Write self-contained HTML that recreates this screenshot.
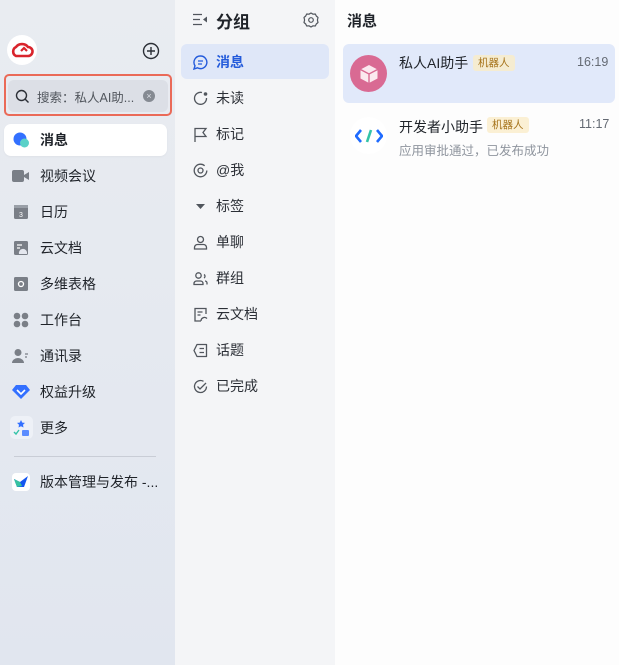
<!DOCTYPE html>
<html><head><meta charset="utf-8"><style>
*{margin:0;padding:0;box-sizing:border-box}
body{width:619px;height:665px;overflow:hidden;font-family:"Liberation Sans","Noto Sans CJK SC",sans-serif;position:relative;background:#fdfdfd}
.l{position:absolute;left:0;top:0;width:175px;height:665px;background:linear-gradient(180deg,#e9ecf1,#e1e6ef)}
.m{position:absolute;left:175px;top:0;width:160px;height:665px;background:#f4f5f7}
.r{position:absolute;left:335px;top:0;width:284px;height:665px;background:#fdfdfd}
.a{position:absolute}
.li{position:absolute;left:12px;height:20px;display:flex;align-items:center;font-size:14px;color:#1f2329}
.li .ic{width:18px;height:18px;margin-right:10px;display:flex;align-items:center;justify-content:center}
.mi{position:absolute;left:16px;height:20px;display:flex;align-items:center;font-size:14px;color:#2b2f36}
.mi svg{margin-right:8px}
</style></head><body>
<div class="l"></div><div class="m"></div><div class="r"></div>

<div class="a" style="left:7px;top:35px;width:30px;height:30px;border-radius:50%;background:#fff;display:flex;align-items:center;justify-content:center">
<svg width="24" height="16" viewBox="0 0 24 16"><path d="M6 14 A5 5 0 0 1 6 5 A7 6 0 0 1 18 5 A4.5 4.5 0 0 1 18 14 Z" fill="none" stroke="#d9242c" stroke-width="2.6"/><path d="M11 9 l3 -3 l3 3" fill="none" stroke="#d9242c" stroke-width="2.2"/></svg></div>
<svg class="a" style="left:142px;top:42px" width="18" height="18" viewBox="0 0 18 18"><circle cx="9" cy="9" r="7.5" fill="none" stroke="#2b2f36" stroke-width="1.4"/><path d="M9 5v8M5 9h8" stroke="#2b2f36" stroke-width="1.4"/></svg>

<div class="a" style="left:4px;top:74px;width:168px;height:42px;border:2px solid #ea6a58;border-radius:5px"></div>
<div class="a" style="left:8px;top:80px;width:160px;height:32px;background:#dcdfe6;border-radius:6px"></div>
<svg class="a" style="left:15px;top:89px" width="15" height="15" viewBox="0 0 15 15"><circle cx="6.5" cy="6.5" r="5" fill="none" stroke="#2b2f36" stroke-width="1.4"/><path d="M10 10l3.5 3.5" stroke="#2b2f36" stroke-width="1.4"/></svg>
<div class="a" style="left:37px;top:87px;font-size:12.5px;color:#51565d">搜索：私人AI助...</div>
<div class="a" style="left:143px;top:90px;width:12px;height:12px;border-radius:50%;background:#858a92;color:#dcdfe6;font-size:9px;line-height:12px;text-align:center">×</div>

<div class="a" style="left:4px;top:124px;width:163px;height:32px;background:#fff;border-radius:7px;box-shadow:0 1px 2px rgba(0,0,0,.04)"></div>
<div class="li" style="top:130px;font-weight:bold"><span class="ic"><svg width="18" height="18"><circle cx="8" cy="8" r="6.5" fill="#3370ff"/><circle cx="12.5" cy="12" r="4.5" fill="#5ad1c8"/></svg></span>消息</div>
<div class="li" style="top:166px"><span class="ic"><svg width="18" height="14"><rect x="0" y="1" width="12" height="12" rx="2" fill="#7a7f87"/><path d="M12 6l5-3v8l-5-3z" fill="#7a7f87"/></svg></span>视频会议</div>
<div class="li" style="top:202px"><span class="ic"><svg width="16" height="16"><rect x="1" y="1" width="14" height="14" rx="1.5" fill="#7a7f87"/><rect x="1" y="1" width="14" height="3" fill="#9aa0a8"/><text x="6" y="13" font-size="7" fill="#fff">3</text></svg></span>日历</div>
<div class="li" style="top:238px"><span class="ic"><svg width="16" height="16"><rect x="1" y="1" width="14" height="14" rx="1.5" fill="#7a7f87"/><path d="M4 5h5M4 8h3" stroke="#fff" stroke-width="1.3"/><path d="M6 14a4 4 0 0 1 8-2v2z" fill="#e4e7ee"/></svg></span>云文档</div>
<div class="li" style="top:274px"><span class="ic"><svg width="16" height="16"><rect x="1" y="1" width="14" height="14" rx="1.5" fill="#7a7f87"/><circle cx="8" cy="8" r="2.5" fill="none" stroke="#fff" stroke-width="1.3"/></svg></span>多维表格</div>
<div class="li" style="top:310px"><span class="ic"><svg width="16" height="16" fill="#7a7f87"><circle cx="4" cy="4" r="3.3"/><circle cx="12" cy="4" r="3.3"/><circle cx="4" cy="12" r="3.3"/><circle cx="12" cy="12" r="3.3"/></svg></span>工作台</div>
<div class="li" style="top:346px"><span class="ic"><svg width="18" height="16" fill="#7a7f87"><circle cx="6" cy="4.5" r="3.5"/><path d="M0 15a6 5 0 0 1 12 0z"/><path d="M13 6h3M13 9h2" stroke="#7a7f87" stroke-width="1.2"/></svg></span>通讯录</div>
<div class="li" style="top:382px"><span class="ic"><svg width="18" height="16"><path d="M4 1h10l4 5-9 9-9-9z" fill="#3370ff"/><path d="M5 6l4 4 4-4" fill="none" stroke="#fff" stroke-width="1.6"/></svg></span>权益升级</div>
<div class="a" style="left:10px;top:416px;width:23px;height:23px;background:#eef1f7;border-radius:5px"></div>
<div class="li" style="top:418px"><span class="ic"><svg width="18" height="18"><path d="M9 1l1.3 2.6 2.7.3-2 1.9.5 2.7L9 7.2 6.5 8.5 7 5.8 5 3.9l2.7-.3z" fill="#3370ff"/><path d="M2 13l2 2 3-4" fill="none" stroke="#34c3a8" stroke-width="1.4"/><rect x="10" y="11" width="7" height="6" rx="1" fill="#5b8cff"/></svg></span>更多</div>
<div class="a" style="left:14px;top:456px;width:142px;height:1px;background:#c9cdd6"></div>
<div class="li" style="top:472px;font-size:14px"><span class="ic" style="background:#fff;border-radius:4px"><svg width="16" height="14"><path d="M1 4l6 3 8-6-4 11H4z" fill="#1456f0"/><path d="M1 4l6 3 2 4-5 1z" fill="#37c2a0"/></svg></span>版本管理与发布 -...</div>

<svg class="a" style="left:193px;top:13px" width="15" height="13"><path d="M0 1.5h9M0 6.5h7M0 11.5h9" stroke="#51565d" stroke-width="1.3"/><path d="M14 3.5v6l-4-3z" fill="#51565d"/></svg>
<div class="a" style="left:216px;top:8px;font-size:17px;font-weight:bold;color:#1f2329">分组</div>
<svg class="a" style="left:303px;top:12px" width="16" height="16" viewBox="0 0 16 16"><path d="M8 1l2 1.2 2.3-.2 1 2 1.7 1.5-.6 2.5.6 2.5-1.7 1.5-1 2-2.3-.2L8 15l-2-1.2-2.3.2-1-2L1 10.5 1.6 8 1 5.5 2.7 4l1-2 2.3.2z" fill="none" stroke="#51565d" stroke-width="1.2" stroke-linejoin="round"/><circle cx="8" cy="8" r="2.3" fill="none" stroke="#51565d" stroke-width="1.2"/></svg>
<div class="a" style="left:181px;top:44px;width:148px;height:35px;background:#dfe7f8;border-radius:6px"></div>
<div class="mi" style="top:52px;color:#245bdb;font-weight:bold;left:193px"><svg width="15" height="15"><path d="M7.5 1a6.3 6.3 0 1 1-3 11.8L1 14l1-3.3A6.3 6.3 0 0 1 7.5 1z" fill="none" stroke="#245bdb" stroke-width="1.4"/><path d="M5 6h5M5 9h4" stroke="#245bdb" stroke-width="1.3"/></svg>消息</div>
<div class="mi" style="top:88px;left:193px"><svg width="15" height="15"><path d="M9 1.5A6 6 0 1 0 13.5 7" fill="none" stroke="#51565d" stroke-width="1.3"/><circle cx="12.5" cy="3" r="1.8" fill="#51565d"/></svg>未读</div>
<div class="mi" style="top:124px;left:193px"><svg width="15" height="15"><path d="M2 15V1.5h11l-3 4 3 4H2" fill="none" stroke="#51565d" stroke-width="1.3"/></svg>标记</div>
<div class="mi" style="top:160px;left:193px"><svg width="15" height="15"><circle cx="7.5" cy="7.5" r="6.3" fill="none" stroke="#51565d" stroke-width="1.3" stroke-dasharray="34 6"/><circle cx="7.5" cy="7.5" r="2.5" fill="none" stroke="#51565d" stroke-width="1.3"/></svg>@我</div>
<div class="mi" style="top:196px;left:193px"><svg width="15" height="15"><path d="M3 5h9l-4.5 5z" fill="#51565d"/></svg>标签</div>
<div class="mi" style="top:232px;left:193px"><svg width="15" height="15"><circle cx="7.5" cy="4.5" r="3" fill="none" stroke="#51565d" stroke-width="1.3"/><path d="M1.5 14v-1.5a3 3 0 0 1 3-3h6a3 3 0 0 1 3 3V14z" fill="none" stroke="#51565d" stroke-width="1.3"/></svg>单聊</div>
<div class="mi" style="top:268px;left:193px"><svg width="15" height="15"><circle cx="5.5" cy="4.5" r="2.7" fill="none" stroke="#51565d" stroke-width="1.3"/><path d="M1 13.5v-1a2.5 2.5 0 0 1 2.5-2.5h4A2.5 2.5 0 0 1 10 12.5v1z" fill="none" stroke="#51565d" stroke-width="1.3"/><path d="M11 3.5a2 2 0 0 1 0 3.5M12 10a2 2 0 0 1 2 2v1.5" fill="none" stroke="#51565d" stroke-width="1.3"/></svg>群组</div>
<div class="mi" style="top:304px;left:193px"><svg width="15" height="15"><path d="M8 14H2V1.5h11V7" fill="none" stroke="#51565d" stroke-width="1.3"/><path d="M4.5 5h5M4.5 8h3M8 14a3.5 3.5 0 0 1 6-2.5" fill="none" stroke="#51565d" stroke-width="1.3"/></svg>云文档</div>
<div class="mi" style="top:340px;left:193px"><svg width="15" height="15"><path d="M4 1.5h9.5v12H4L1 7.5z" fill="none" stroke="#51565d" stroke-width="1.3" stroke-linejoin="round"/><path d="M6.5 5.5h4.5M6.5 9.5h4.5" stroke="#51565d" stroke-width="1.3"/></svg>话题</div>
<div class="mi" style="top:376px;left:193px"><svg width="15" height="15"><path d="M13.5 7.5a6 6 0 1 1-3-5.2" fill="none" stroke="#51565d" stroke-width="1.3"/><path d="M4.5 7.5l2.5 2.5 6-6" fill="none" stroke="#51565d" stroke-width="1.3"/></svg>已完成</div>

<div class="a" style="left:347px;top:10px;font-size:15px;font-weight:bold;color:#1f2329">消息</div>
<div class="a" style="left:343px;top:44px;width:272px;height:59px;background:#e1e9fa;border-radius:6px"></div>
<div class="a" style="left:350px;top:55px;width:37px;height:37px;border-radius:50%;background:#d96a93;display:flex;align-items:center;justify-content:center">
<svg width="22" height="22" viewBox="0 0 22 22"><path d="M11 2l8.5 4.5v9L11 20l-8.5-4.5v-9z" fill="#fbe9ef"/><path d="M2.5 6.5L11 11l8.5-4.5M11 11v9" fill="none" stroke="#d96a93" stroke-width="1.4"/></svg></div>
<div class="a" style="left:399px;top:53px;font-size:14px;color:#1f2329">私人AI助手</div>
<div class="a" style="left:473px;top:55px;height:16px;padding:0 5px;background:#f5ecd1;color:#a6731a;font-size:10.5px;line-height:16px;border-radius:3px">机器人</div>
<div class="a" style="left:577px;top:55px;font-size:12.5px;color:#646a73">16:19</div>

<div class="a" style="left:350px;top:117px;width:37px;height:37px;border-radius:50%;background:#fff;display:flex;align-items:center;justify-content:center">
<svg width="28" height="14" viewBox="0 0 28 14"><path d="M6 1L1 7l5 6" fill="none" stroke="#1f6bff" stroke-width="2.6"/><path d="M22 1l5 6-5 6" fill="none" stroke="#1f6bff" stroke-width="2.6"/><path d="M12 13l4-12" stroke="#34c3a8" stroke-width="2.6"/></svg></div>
<div class="a" style="left:399px;top:117px;font-size:14px;color:#1f2329">开发者小助手</div>
<div class="a" style="left:487px;top:117px;height:16px;padding:0 5px;background:#fbf0d4;color:#a6731a;font-size:10.5px;line-height:16px;border-radius:3px">机器人</div>
<div class="a" style="left:579px;top:117px;font-size:12.5px;color:#646a73">11:17</div>
<div class="a" style="left:399px;top:140px;font-size:12.5px;color:#8f959e">应用审批通过，已发布成功</div>
</body></html>
